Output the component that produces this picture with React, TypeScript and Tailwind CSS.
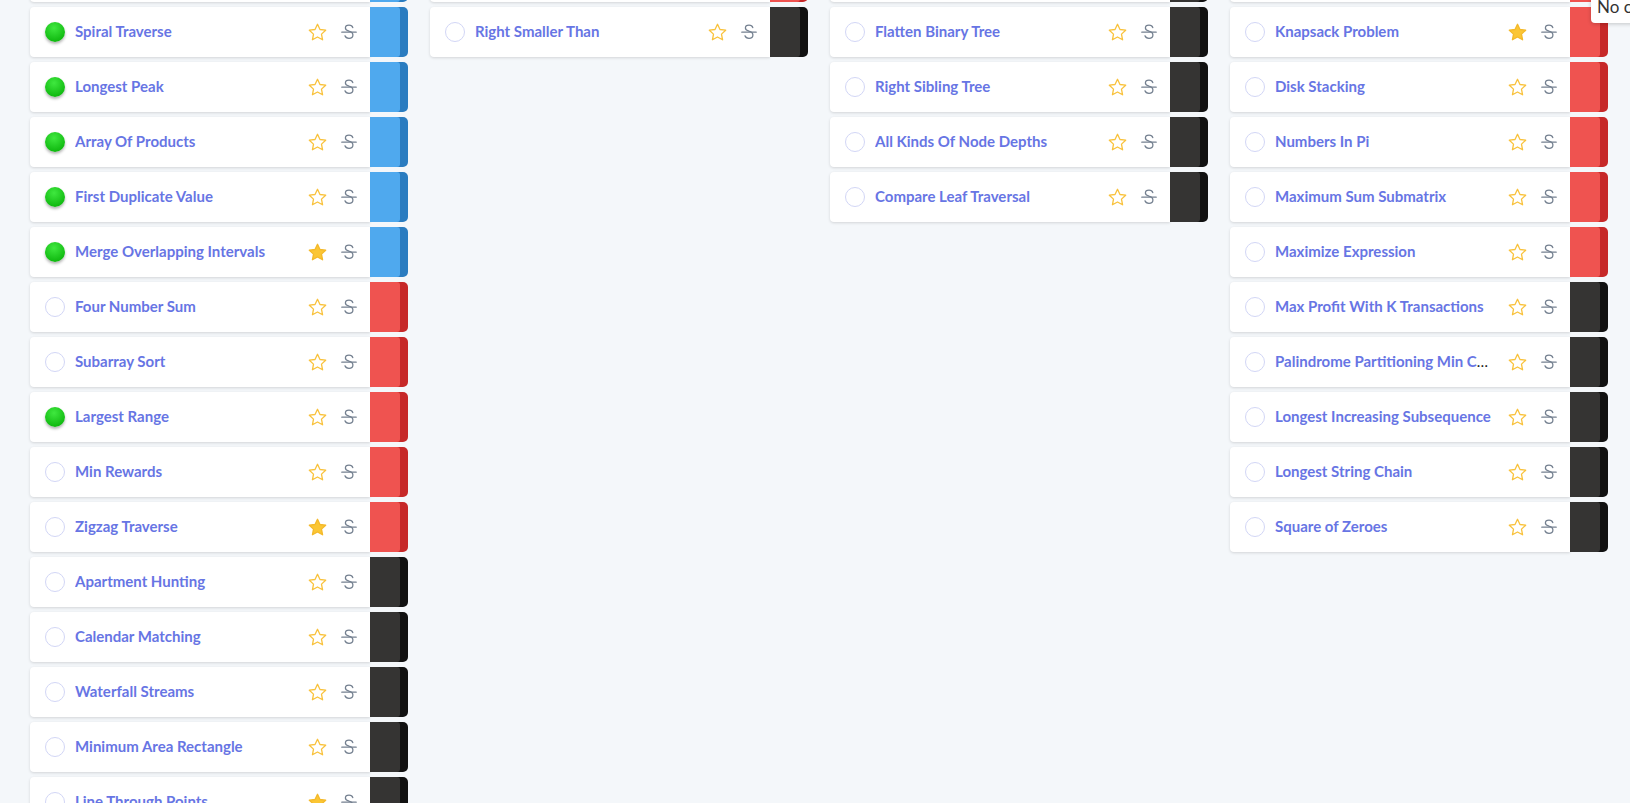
import React from 'react';

type Level = 'blue' | 'red' | 'dark';

type Problem = {
  name: string;
  done?: boolean;
  starred?: boolean;
  level: Level;
};

const tabColors: Record<Level, { back: string; front: string }> = {
  blue: { back: 'bg-[#2a7cc0]', front: 'bg-[#4fa9ee]' },
  red: { back: 'bg-[#c62828]', front: 'bg-[#ef5350]' },
  dark: { back: 'bg-[#111111]', front: 'bg-[#353433]' },
};

const columns: Problem[][] = [
  [
    { name: 'Monotonic Array', done: true, level: 'blue' },
    { name: 'Spiral Traverse', done: true, level: 'blue' },
    { name: 'Longest Peak', done: true, level: 'blue' },
    { name: 'Array Of Products', done: true, level: 'blue' },
    { name: 'First Duplicate Value', done: true, level: 'blue' },
    { name: 'Merge Overlapping Intervals', done: true, starred: true, level: 'blue' },
    { name: 'Four Number Sum', level: 'red' },
    { name: 'Subarray Sort', level: 'red' },
    { name: 'Largest Range', done: true, level: 'red' },
    { name: 'Min Rewards', level: 'red' },
    { name: 'Zigzag Traverse', starred: true, level: 'red' },
    { name: 'Apartment Hunting', level: 'dark' },
    { name: 'Calendar Matching', level: 'dark' },
    { name: 'Waterfall Streams', level: 'dark' },
    { name: 'Minimum Area Rectangle', level: 'dark' },
    { name: 'Line Through Points', starred: true, level: 'dark' },
  ],
  [
    { name: 'Same BSTs', level: 'red' },
    { name: 'Right Smaller Than', level: 'dark' },
  ],
  [
    { name: 'Iterative In-order Traversal', level: 'dark' },
    { name: 'Flatten Binary Tree', level: 'dark' },
    { name: 'Right Sibling Tree', level: 'dark' },
    { name: 'All Kinds Of Node Depths', level: 'dark' },
    { name: 'Compare Leaf Traversal', level: 'dark' },
  ],
  [
    { name: 'Water Area', level: 'red' },
    { name: 'Knapsack Problem', starred: true, level: 'red' },
    { name: 'Disk Stacking', level: 'red' },
    { name: 'Numbers In Pi', level: 'red' },
    { name: 'Maximum Sum Submatrix', level: 'red' },
    { name: 'Maximize Expression', level: 'red' },
    { name: 'Max Profit With K Transactions', level: 'dark' },
    { name: 'Palindrome Partitioning Min Cuts', level: 'dark' },
    { name: 'Longest Increasing Subsequence', level: 'dark' },
    { name: 'Longest String Chain', level: 'dark' },
    { name: 'Square of Zeroes', level: 'dark' },
  ],
];

const StarIcon = ({ filled }: { filled?: boolean }) => (
  <svg width="21" height="21" viewBox="0 0 24 24" className="shrink-0">
    <path
      d="M12 2.6l2.85 5.95 6.5.8-4.78 4.5 1.22 6.45L12 17.15 6.21 20.3l1.22-6.45-4.78-4.5 6.5-.8z"
      fill={filled ? '#fbc634' : 'none'}
      stroke={filled ? '#f4b92a' : '#f9c23c'}
      strokeWidth="1.5"
      strokeLinejoin="round"
    />
  </svg>
);

const StrikeIcon = () => (
  <svg width="16" height="18" viewBox="0 0 16 18" className="shrink-0">
    <path
      d="M11.8 4.6C11.3 3 9.9 2.2 8 2.2 5.8 2.2 4.4 3.4 4.4 5c0 1.9 1.8 2.6 3.6 3.2 2 .6 3.9 1.4 3.9 3.8 0 1.9-1.7 3.3-3.9 3.3-2 0-3.5-.9-4-2.5"
      fill="none"
      stroke="#748090"
      strokeWidth="1.3"
      strokeLinecap="round"
    />
    <path d="M0.8 9.2H15.2" stroke="#748090" strokeWidth="1.3" strokeLinecap="round" />
  </svg>
);

const Status = ({ done }: { done?: boolean }) =>
  done ? (
    <span className="h-5 w-5 shrink-0 rounded-full bg-[radial-gradient(circle_at_45%_30%,#3fe83f,#10b910_75%)] shadow-[0_2px_3px_rgba(0,0,0,0.3)]" />
  ) : (
    <span className="h-5 w-5 shrink-0 rounded-full border border-[#d2d6f6] bg-white" />
  );

const ProblemRow = ({ problem }: { problem: Problem }) => {
  const tab = tabColors[problem.level];
  return (
    <div className="flex h-[50px]">
      <div className="flex min-w-0 flex-1 items-center rounded-l-[4px] bg-white pl-[15px] pr-[13px] shadow-[0_1px_3px_rgba(0,0,0,0.14)]">
        <Status done={problem.done} />
        <div className="ml-[10px] mr-[14px] min-w-0 flex-1 truncate pb-[2px] text-[15px] text-[#222]">
          <span className="font-bold text-[#6775e4]">{problem.name}</span>
        </div>
        <StarIcon filled={problem.starred} />
        <span className="ml-[13px] flex">
          <StrikeIcon />
        </span>
      </div>
      <div className={`flex w-[38px] shrink-0 rounded-r-[5px] ${tab.back}`}>
        <div className={`w-[30px] rounded-r-[3px] ${tab.front}`} />
      </div>
    </div>
  );
};

export default function App() {
  return (
    <div
      className="relative h-[803px] overflow-hidden bg-[#f4f7fa]"
      style={{ fontFamily: 'Lato, "Open Sans", sans-serif' }}
    >
      <div className="-mt-[48px] grid grid-cols-[repeat(4,378px)] items-start gap-x-[22px] pl-[30px]">
        {columns.map((col, i) => (
          <div key={i} className="flex flex-col gap-[5px]">
            {col.map((p) => (
              <ProblemRow key={p.name} problem={p} />
            ))}
          </div>
        ))}
      </div>
      <div className="absolute left-[1591px] -top-[6px] whitespace-nowrap rounded-bl-[4px] bg-white pb-[3px] pl-[6px] pr-3 text-[17px] text-[#333] shadow-[0_1px_4px_rgba(0,0,0,0.2)]">
        No code submitted
      </div>
    </div>
  );
}
